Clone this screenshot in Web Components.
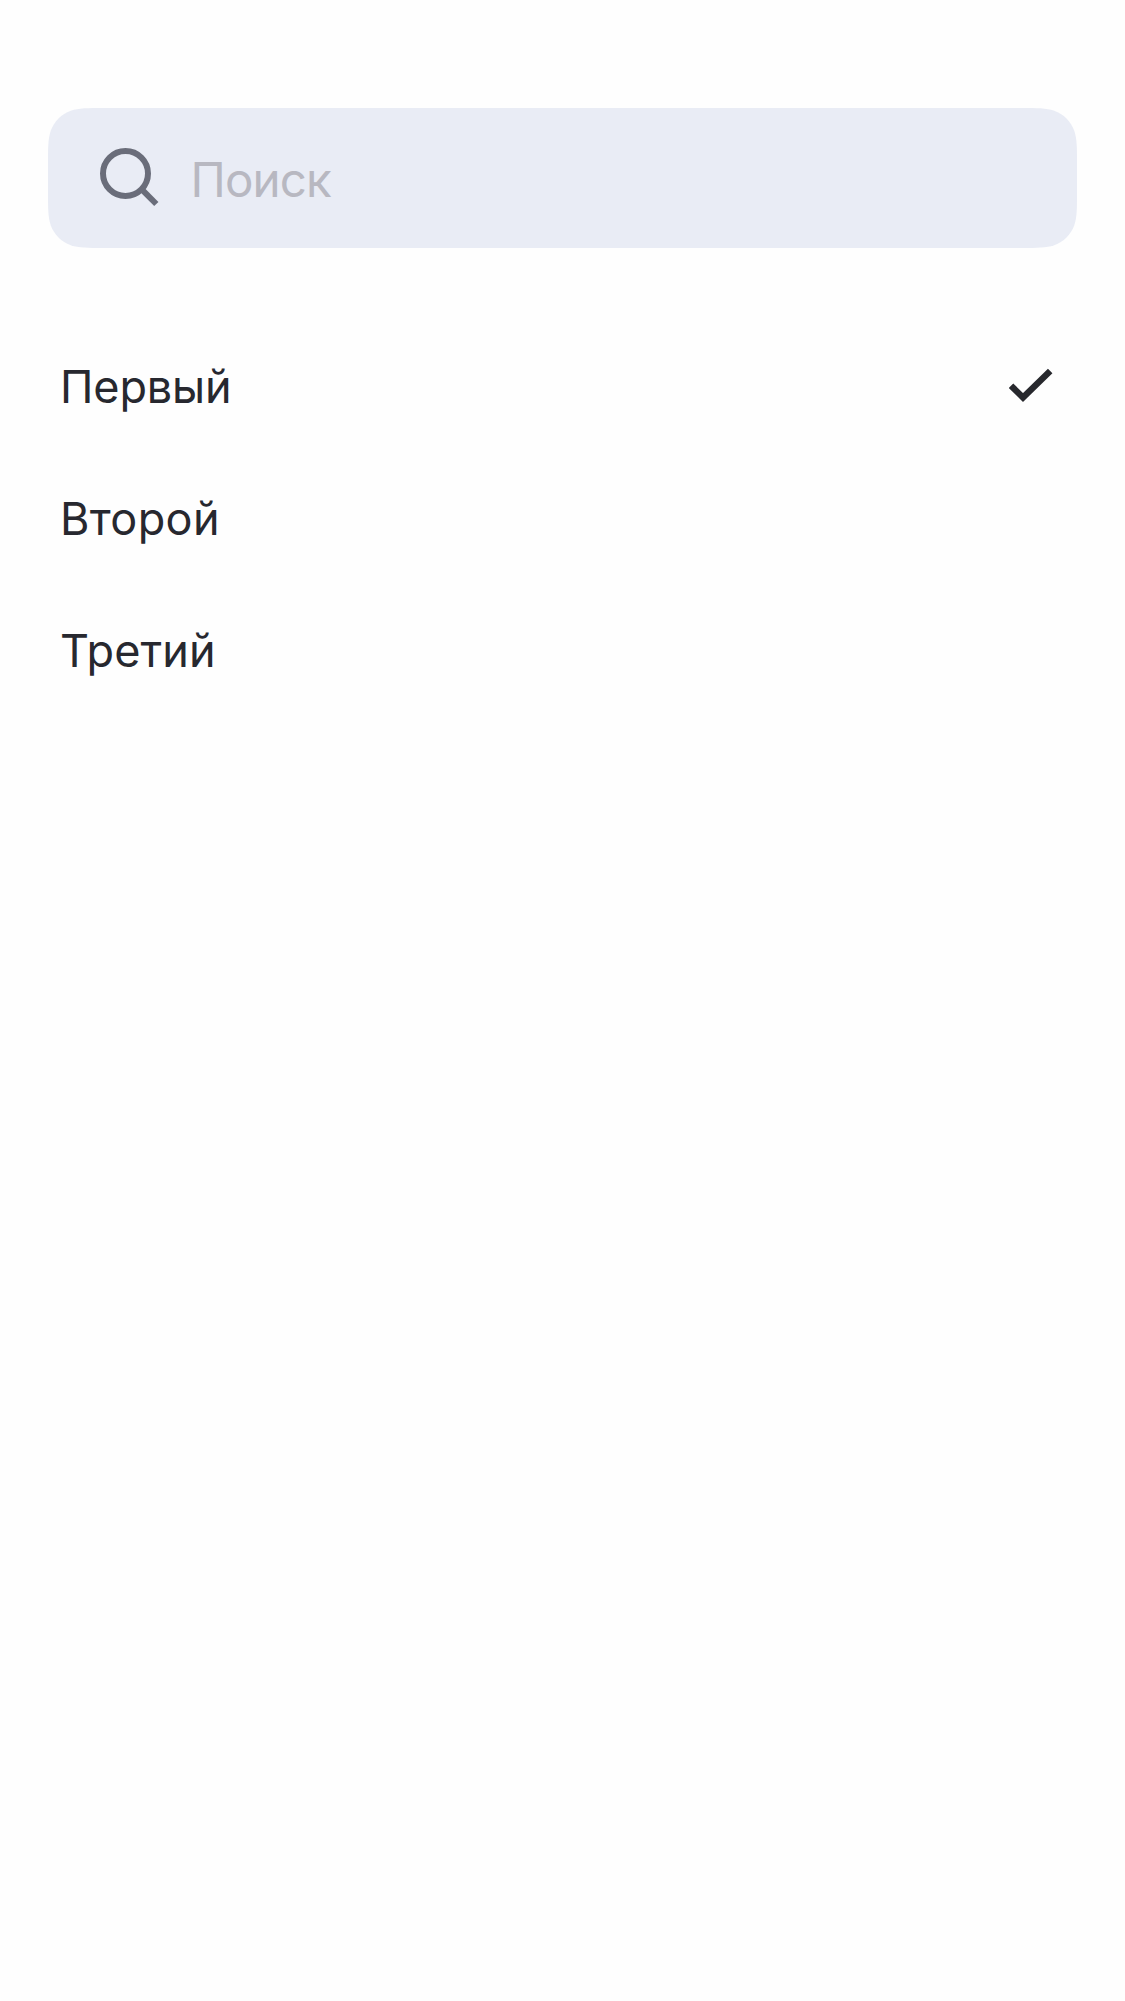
<!DOCTYPE html>
<html lang="ru">
<head>
<meta charset="utf-8">
<title>Выбор</title>
<style>
html, body { margin: 0; background: #fefefe; }
body { font-family: Inter, "Liberation Sans", sans-serif; font-weight: 400; color: #27282f; }
</style>
</head>
<body>
<picker-screen>
  <search-bar slot="search">Поиск</search-bar>
  <option-row selected style="--tracking: -0.15px">Первый</option-row>
  <option-row style="--tracking: 0.35px">Второй</option-row>
  <option-row style="--tracking: 0.1px">Третий</option-row>
</picker-screen>
<script>
class PickerScreen extends HTMLElement {
  constructor() {
    super();
    this.attachShadow({ mode: 'open' }).innerHTML = `
      <style>
        :host { display: flex; flex-direction: column; box-sizing: border-box; min-height: 2001px; padding: 108px 48px 0; gap: 73px; }
        .list { display: flex; flex-direction: column; }
      </style>
      <slot name="search"></slot>
      <div class="list"><slot></slot></div>`;
  }
}
class SearchBar extends HTMLElement {
  constructor() {
    super();
    this.attachShadow({ mode: 'open' }).innerHTML = `
      <style>
        :host { display: flex; align-items: center; height: 140px; box-sizing: border-box; padding-left: 52px; gap: 30.5px; background: #e9ecf5; }
        svg { width: 60px; height: 60px; flex: none; }
        .hint { font-size: 47.5px; line-height: 60px; letter-spacing: -0.9px; color: #b8b8c1; padding-top: 4px; }
      </style>
      <svg viewBox="0 0 60 60" fill="none" stroke="#6a6d7a" stroke-width="6"><circle cx="25.5" cy="25.5" r="22.5"/><path d="M41 40.7L56.3 56" stroke-width="6"/></svg>
      <span class="hint"><slot></slot></span>`;
  }
  connectedCallback() {
    // Continuous-curvature corners
    const w = 1029, h = 140, r = 36;
    const a = 1.52866 * r, b = 1.08849 * r, c = 0.8684 * r, d = 0.63149 * r, e = 0.07491 * r, f = 0.37282 * r, g = 0.16906 * r;
    this.style.clipPath = `path("M${a} 0L${w - a} 0C${w - b} 0 ${w - c} 0 ${w - d} ${e}C${w - f} ${g} ${w - g} ${f} ${w - e} ${d}C${w} ${c} ${w} ${b} ${w} ${a}L${w} ${h - a}C${w} ${h - b} ${w} ${h - c} ${w - e} ${h - d}C${w - g} ${h - f} ${w - f} ${h - g} ${w - d} ${h - e}C${w - c} ${h} ${w - b} ${h} ${w - a} ${h}L${a} ${h}C${b} ${h} ${c} ${h} ${d} ${h - e}C${f} ${h - g} ${g} ${h - f} ${e} ${h - d}C0 ${h - c} 0 ${h - b} 0 ${h - a}L0 ${a}C0 ${b} 0 ${c} ${e} ${d}C${g} ${f} ${f} ${g} ${d} ${e}C${c} 0 ${b} 0 ${a} 0Z")`;
  }
}
class OptionRow extends HTMLElement {
  constructor() {
    super();
    this.attachShadow({ mode: 'open' }).innerHTML = `
      <style>
        :host { display: flex; align-items: center; justify-content: space-between; height: 132px; box-sizing: border-box; padding: 0 24px 0 12px; }
        .label { font-size: 45px; line-height: 60px; letter-spacing: var(--tracking, 0); }
        svg { display: none; width: 44px; height: 36px; margin-top: -5px; }
        :host([selected]) svg { display: block; }
      </style>
      <span class="label"><slot></slot></span>
      <svg viewBox="1009 367 44 36" fill="none" stroke="#27282d" stroke-width="6.4"><path d="M1011 385.7L1023 397.5L1050.2 371"/></svg>`;
  }
}
customElements.define('picker-screen', PickerScreen);
customElements.define('search-bar', SearchBar);
customElements.define('option-row', OptionRow);
</script>
</body>
</html>
